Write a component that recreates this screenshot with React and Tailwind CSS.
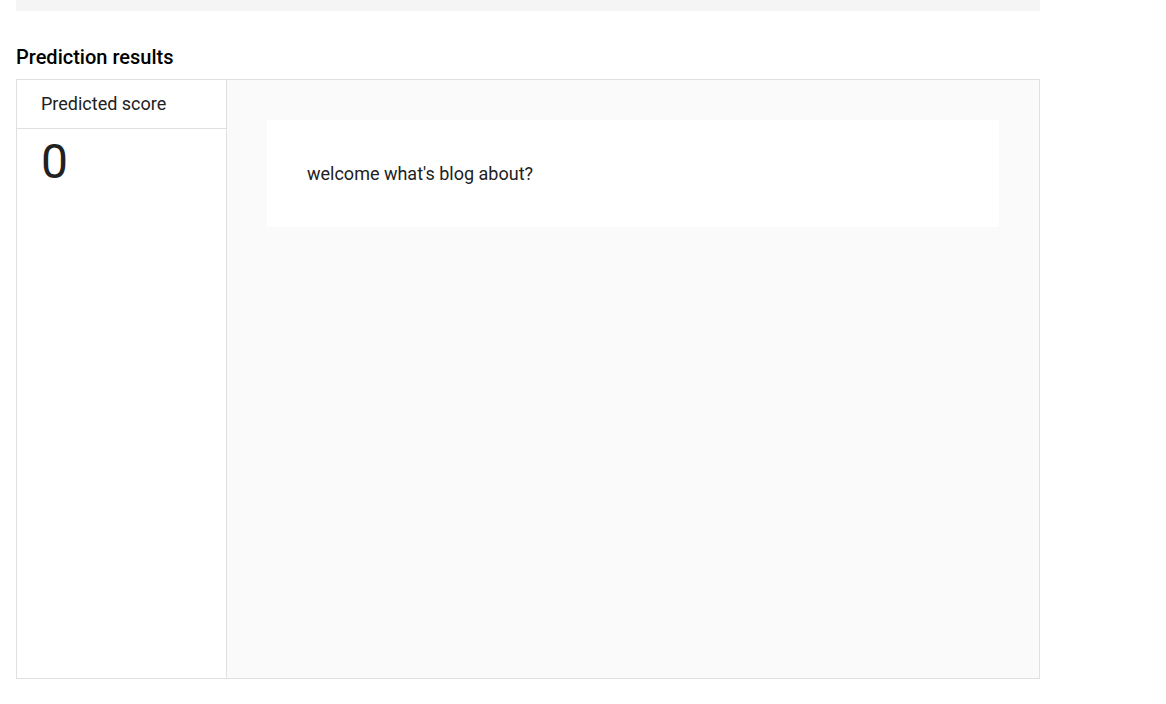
import React from 'react'

function ScoreColumn({ score }) {
    return (
        <div className="w-[210px] shrink-0 border-r border-[#e0e0e0] bg-white flex flex-col">
            <div className="h-[49px] border-b border-[#e0e0e0] flex items-center pl-6 pb-[2px] text-[18px] text-[#212121]">
                Predicted score
            </div>
            <div className="pl-6 pt-[5px] text-[48px] leading-[56px] text-[#212121]">{score}</div>
        </div>
    )
}

export default function App() {
    return (
        <div className="w-[1166px] h-[704px] bg-white font-['Roboto',sans-serif]">
            <div className="ml-4 w-[1024px]">
                <div className="h-[11px] bg-[#f5f5f5]" />
                <h2 className="mt-[34px] text-[20px] leading-6 font-medium text-black">Prediction results</h2>
                <div className="mt-[10px] h-[600px] border border-[#e0e0e0] flex">
                    <ScoreColumn score={0} />
                    <div className="flex-1 bg-[#fafafa] p-10">
                        <div className="h-[107px] bg-white flex items-center px-10 text-[18px] text-[#212121]">
                            welcome what's blog about?
                        </div>
                    </div>
                </div>
            </div>
        </div>
    )
}
